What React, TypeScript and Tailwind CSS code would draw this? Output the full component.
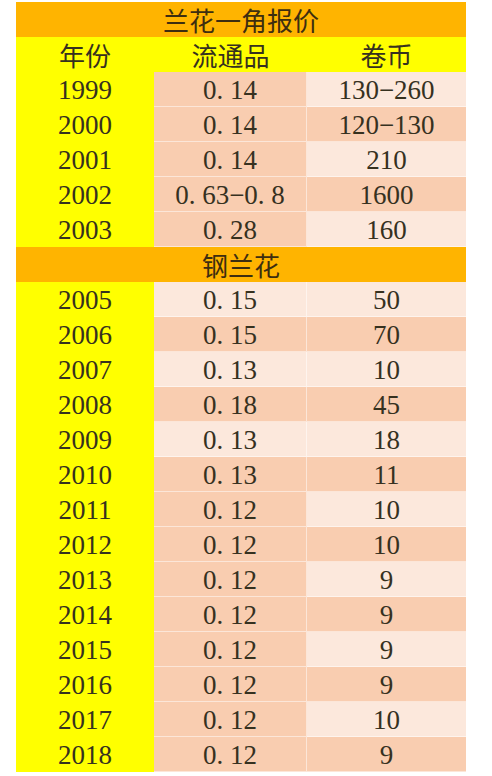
import React from "react";

type Row = { year: string; price: string; roll: string; mid: "d" | "l"; right: "d" | "l" };

const section1: Row[] = [
  { year: "1999", price: "0. 14", roll: "130−260", mid: "d", right: "l" },
  { year: "2000", price: "0. 14", roll: "120−130", mid: "d", right: "d" },
  { year: "2001", price: "0. 14", roll: "210", mid: "d", right: "l" },
  { year: "2002", price: "0. 63−0. 8", roll: "1600", mid: "d", right: "d" },
  { year: "2003", price: "0. 28", roll: "160", mid: "d", right: "l" },
];

const section2: Row[] = [
  { year: "2005", price: "0. 15", roll: "50", mid: "l", right: "l" },
  { year: "2006", price: "0. 15", roll: "70", mid: "d", right: "d" },
  { year: "2007", price: "0. 13", roll: "10", mid: "l", right: "l" },
  { year: "2008", price: "0. 18", roll: "45", mid: "d", right: "d" },
  { year: "2009", price: "0. 13", roll: "18", mid: "l", right: "l" },
  { year: "2010", price: "0. 13", roll: "11", mid: "d", right: "d" },
  { year: "2011", price: "0. 12", roll: "10", mid: "d", right: "l" },
  { year: "2012", price: "0. 12", roll: "10", mid: "d", right: "d" },
  { year: "2013", price: "0. 12", roll: "9", mid: "d", right: "l" },
  { year: "2014", price: "0. 12", roll: "9", mid: "d", right: "d" },
  { year: "2015", price: "0. 12", roll: "9", mid: "d", right: "l" },
  { year: "2016", price: "0. 12", roll: "9", mid: "d", right: "d" },
  { year: "2017", price: "0. 12", roll: "10", mid: "d", right: "l" },
  { year: "2018", price: "0. 12", roll: "9", mid: "d", right: "d" },
];

const serif = "font-['Liberation_Serif','Noto_Sans_CJK_SC',serif] text-[27px]";
const cjk = "font-['Noto_Sans_CJK_SC',sans-serif] text-[26px]";

function DataRow({ row }: { row: Row }) {
  return (
    <div className={`flex h-[35px] leading-none text-[#36311f] ${serif}`}>
      <div className="w-[138px] bg-[#ffff00] flex items-center justify-center pt-[2px]">{row.year}</div>
      <div
        className={`w-[153px] flex items-center justify-center pt-[2px] border-b border-r border-white/50 ${
          row.mid === "d" ? "bg-[#f9cdb0]" : "bg-[#fce8dc]"
        }`}
      >
        {row.price}
      </div>
      <div
        className={`w-[159px] flex items-center justify-center pt-[2px] border-b border-white/50 ${
          row.right === "d" ? "bg-[#f9cdb0]" : "bg-[#fce8dc]"
        }`}
      >
        {row.roll}
      </div>
    </div>
  );
}

function Band({ title }: { title: string }) {
  return (
    <div className={`h-[35px] bg-[#ffb400] flex items-center justify-center text-[#3d2e10] ${cjk}`}>{title}</div>
  );
}

export default function App() {
  return (
    <div className="w-[492px] h-[776px] bg-white pt-[2px] pl-[16px]">
      <div className="w-[450px] flex flex-col">
        <Band title="兰花一角报价" />
        <div className={`flex h-[35px] bg-[#ffff00] text-[#36311f] ${cjk}`}>
          <div className="w-[138px] flex items-center justify-center">年份</div>
          <div className="w-[153px] flex items-center justify-center">流通品</div>
          <div className="w-[159px] flex items-center justify-center">卷币</div>
        </div>
        {section1.map((r) => (
          <DataRow key={r.year} row={r} />
        ))}
        <Band title="钢兰花" />
        {section2.map((r) => (
          <DataRow key={r.year} row={r} />
        ))}
      </div>
    </div>
  );
}
